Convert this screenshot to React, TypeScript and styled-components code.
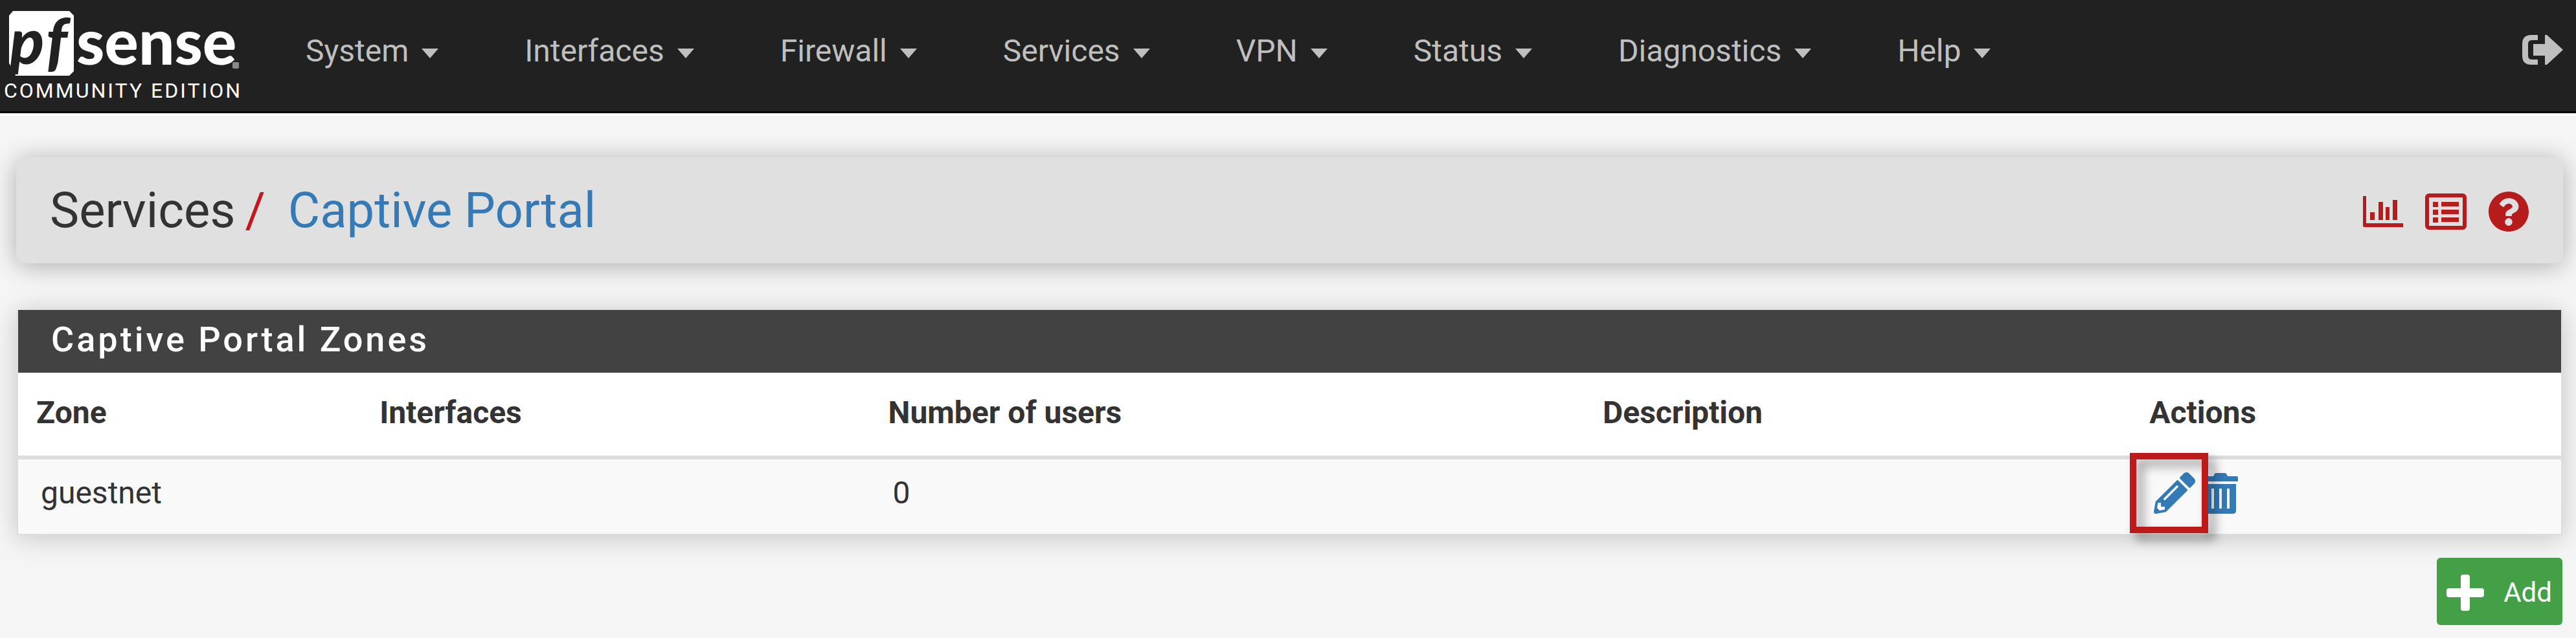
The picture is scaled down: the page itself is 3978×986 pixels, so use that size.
import React from "react";
import styled, { createGlobalStyle } from "styled-components";
import { FaPencilAlt, FaQuestionCircle } from "react-icons/fa";

const GlobalStyle = createGlobalStyle`
  *, *::before, *::after { box-sizing: border-box; }
  body {
    margin: 0;
    background: #f5f5f5;
    color: #333;
    font-family: Roboto, "Liberation Sans", sans-serif;
    font-size: 48px;
    line-height: 60px;
  }
  a { color: inherit; text-decoration: none; }
  button { font: inherit; cursor: pointer; }
  svg { display: block; overflow: visible; }
`;

const Navbar = styled.header`
  display: flex;
  align-items: flex-start;
  height: 175px;
  padding-right: 20px;
  background: #212121;
  color: #bfbfbf;
  border-bottom: 3px solid #000;
  box-shadow: 0 4px 0 #fff;
`;

const Brand = styled.a`
  display: flex;
  flex-direction: column;
  width: 472px;
  padding-left: 6px;
`;

const Edition = styled.span`
  color: #fff;
  font-size: 32px;
  line-height: 28px;
  letter-spacing: 3px;
  white-space: nowrap;
`;

const Menu = styled.nav`
  display: flex;
  flex: 1;
  gap: 133px;
  padding-top: 49px;
`;

const MenuButton = styled.button`
  display: flex;
  align-items: center;
  gap: 20px;
  padding: 0;
  border: 0;
  background: none;
  color: inherit;

  &::after {
    content: "";
    margin-top: 6px;
    border: 13px solid transparent;
    border-top: 15px solid currentColor;
    border-bottom: 0;
  }
`;

const LogoutLink = styled.a`
  padding-top: 53px;
`;

const Content = styled.main`
  display: flex;
  flex-direction: column;
  padding: 68px 20px 20px 25px;
`;

const PageHeader = styled.section`
  display: flex;
  align-items: center;
  justify-content: space-between;
  height: 164px;
  padding: 0 52px;
  border-radius: 14px;
  background: #e0e0e0;
  box-shadow: 0 4px 38px rgba(0, 0, 0, 0.3);
`;

const Breadcrumb = styled.h1`
  display: flex;
  margin: 0;
  font-size: 76px;
  line-height: 88px;
  font-weight: 400;
`;

const Slash = styled.span`
  margin: 0 35px 0 15px;
  color: #c4161c;
`;

const CrumbLink = styled.a`
  color: #337ab7;
`;

const HeaderIcons = styled.div`
  display: flex;
  align-items: center;
  gap: 33px;
  padding-top: 4px;
  color: #b71c1c;
`;

const Panel = styled.section`
  margin: 72px 1px 0 1px;
  border: 2px solid #ddd;
  border-top: 0;
  background: #fff;
  box-shadow: 0 4px 38px rgba(0, 0, 0, 0.2);
`;

const PanelTitle = styled.h2`
  margin: 0;
  padding: 16px 51px 21px;
  background: #424242;
  color: #fff;
  font-size: 54px;
  line-height: 60px;
  font-weight: 500;
  letter-spacing: 4px;
`;

const Table = styled.table`
  width: 100%;
  border-collapse: collapse;
  table-layout: fixed;
`;

const Col = styled.col<{ $share: number }>`
  width: ${(p) => p.$share}%;
`;

const HeadCell = styled.th`
  height: 131px;
  padding: 0 28px 5px;
  border-bottom: 6px solid #ddd;
  text-align: left;
  font-weight: 700;
`;

const Cell = styled.td`
  height: 118px;
  padding: 0 35px 11px;
  background: #f9f9f9;
`;

const Actions = styled.div`
  display: flex;
  align-items: center;
  gap: 12px;
  color: #337ab7;
`;

const ActionButton = styled.button`
  position: relative;
  padding: 0;
  border: 0;
  background: none;
  color: inherit;
`;

const Highlight = styled.span`
  position: absolute;
  z-index: 1;
  inset: -30px -20px -30px -37px;
  border: 10px solid #bd1a1b;
  filter: drop-shadow(10px 10px 8px rgba(0, 0, 0, 0.4));
  pointer-events: none;
`;

const AddButton = styled.button`
  display: flex;
  align-items: center;
  align-self: flex-end;
  gap: 30px;
  height: 104px;
  margin: 35px 1px 0 0;
  padding: 4px 16px 0 15px;
  border: 0;
  border-radius: 6px;
  background: #43a047;
  color: #fff;
  font-size: 42px;
  line-height: 50px;
`;

const Logo = () => (
  <svg width="370" height="126" viewBox="0 0 370 126" role="img" aria-label="pfsense">
    <path d="M14 17h87l7 7v86l-7 7H18L8 98V24z" fill="#fff" />
    <path d="M8 98l10 19H8z" fill="#212121" />
    <text x="9" y="99" fontFamily="Lato, sans-serif" fontSize="98" fontWeight="900" fontStyle="italic" fill="#212121">p</text>
    <text x="65" y="99" fontFamily="Lato, sans-serif" fontSize="98" fontWeight="900" fontStyle="italic" fill="#212121">f</text>
    <text x="112" y="100" fontFamily="Lato, sans-serif" fontSize="98" fontWeight="900" fill="#fff">sense</text>
    <rect x="353" y="96" width="10" height="10" rx="2" fill="#8a8a8a" />
  </svg>
);

const SignOutIcon = () => (
  <svg width="63" height="48" viewBox="0 0 63 48" fill="currentColor">
    <path d="M24 1v8H15q-6 0-6 6v18q0 6 6 6h9v8H14Q0 47 0 33V15Q0 1 14 1z" />
    <path d="M35 1l3 0 25 23L38 47h-3V33H17V15h18z" />
  </svg>
);

const ChartIcon = () => (
  <svg width="64" height="50" viewBox="0 0 64 50" fill="currentColor">
    <path d="M1 1h5v42h57v6H3q-2 0-2-2zM12 26h7v12h-7zM25 10h7v28h-7zM36 18h6v20h-6zM47 7h7v31h-7z" />
  </svg>
);

const ListIcon = () => (
  <svg width="64" height="56" viewBox="0 0 64 56" fill="currentColor">
    <rect x="3" y="3" width="58" height="50" rx="3" fill="none" stroke="currentColor" strokeWidth="6" />
    <path d="M12 13h8v8h-8zM12 25h8v8h-8zM12 37h8v8h-8zM25 13h27v7H25zM25 25h27v7H25zM25 37h27v7H25z" />
  </svg>
);

const TrashIcon = () => (
  <svg width="54" height="63" viewBox="0 0 54 63" fill="currentColor">
    <path d="M16 5l2-4q1-1 3-1h12q2 0 3 1l2 4h14q2 0 2 2v6H0V7q0-2 2-2z" />
    <path fillRule="evenodd" d="M3 17h48v41q0 5-5 5H8q-5 0-5-5zm10 7v31h4V24zm12 0v31h4V24zm12 0v31h4V24z" />
  </svg>
);

const PlusIcon = () => (
  <svg width="58" height="56" viewBox="0 0 58 56" fill="currentColor">
    <rect x="22" y="0" width="14" height="56" rx="4" />
    <rect x="0" y="21" width="58" height="14" rx="4" />
  </svg>
);

const menus = ["System", "Interfaces", "Firewall", "Services", "VPN", "Status", "Diagnostics", "Help"];

const columns = [
  { label: "Zone", share: 13.5 },
  { label: "Interfaces", share: 20 },
  { label: "Number of users", share: 28.1 },
  { label: "Description", share: 21.5 },
  { label: "Actions", share: 16.9 },
];

const zones = [{ name: "guestnet", interfaces: "", users: 0, description: "" }];

export default function App() {
  return (
    <>
      <GlobalStyle />
      <Navbar>
        <Brand href="#">
          <Logo />
          <Edition>COMMUNITY EDITION</Edition>
        </Brand>
        <Menu>
          {menus.map((m) => (
            <MenuButton key={m} type="button">{m}</MenuButton>
          ))}
        </Menu>
        <LogoutLink href="#" aria-label="Log out"><SignOutIcon /></LogoutLink>
      </Navbar>
      <Content>
        <PageHeader>
          <Breadcrumb>
            Services<Slash>/</Slash><CrumbLink href="#">Captive Portal</CrumbLink>
          </Breadcrumb>
          <HeaderIcons>
            <a href="#" aria-label="Status"><ChartIcon /></a>
            <a href="#" aria-label="Logs"><ListIcon /></a>
            <a href="#" aria-label="Help"><FaQuestionCircle size={64} /></a>
          </HeaderIcons>
        </PageHeader>
        <Panel>
          <PanelTitle>Captive Portal Zones</PanelTitle>
          <Table>
            <colgroup>
              {columns.map((c) => <Col key={c.label} $share={c.share} />)}
            </colgroup>
            <thead>
              <tr>{columns.map((c) => <HeadCell key={c.label} scope="col">{c.label}</HeadCell>)}</tr>
            </thead>
            <tbody>
              {zones.map((z) => (
                <tr key={z.name}>
                  <Cell>{z.name}</Cell>
                  <Cell>{z.interfaces}</Cell>
                  <Cell>{z.users}</Cell>
                  <Cell>{z.description}</Cell>
                  <Cell>
                    <Actions>
                      <ActionButton type="button" aria-label="Edit zone">
                        <FaPencilAlt size={64} />
                        <Highlight />
                      </ActionButton>
                      <ActionButton type="button" aria-label="Delete zone"><TrashIcon /></ActionButton>
                    </Actions>
                  </Cell>
                </tr>
              ))}
            </tbody>
          </Table>
        </Panel>
        <AddButton type="button"><PlusIcon />Add</AddButton>
      </Content>
    </>
  );
}
